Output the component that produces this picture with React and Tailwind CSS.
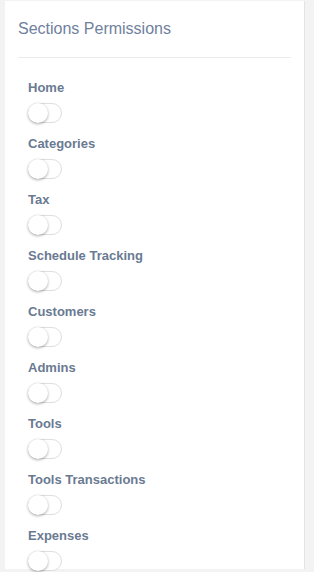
import { useState } from "react";

const sections = [
  "Home",
  "Categories",
  "Tax",
  "Schedule Tracking",
  "Customers",
  "Admins",
  "Tools",
  "Tools Transactions",
  "Expenses",
];

function Toggle({ on, onChange }) {
  return (
    <button
      type="button"
      onClick={onChange}
      className={`relative block h-[20px] w-[34px] rounded-full border ${
        on ? "border-[#7b8fb0] bg-[#7b8fb0]" : "border-[#dedede] bg-white"
      }`}
    >
      <span
        className={`absolute top-[-1px] h-[20px] w-[20px] rounded-full bg-white shadow-[0_1px_3px_rgba(0,0,0,0.35)] ${
          on ? "left-[13px]" : "left-[-1px]"
        }`}
      />
    </button>
  );
}

export default function App() {
  const [perms, setPerms] = useState({});

  return (
    <div className="h-[572px] overflow-hidden bg-[#f3f3f4] pl-[5px] pr-[9px] pt-[1px] font-['Liberation_Sans',Arial,sans-serif]">
      <div className="h-[568px] border-r border-[#e4e4e7] bg-white px-[13px]">
        <h2 className="pt-[18px] text-[16px] leading-[20px] text-[#6f819d]">
          Sections Permissions
        </h2>
        <div className="mt-[18px] border-t border-[#ebebeb]" />
        <div className="px-[10px] pt-[22px]">
          {sections.map((s) => (
            <div key={s} className="mb-[13px]">
              <div className="mb-[7px] text-[13px] font-bold leading-[16px] text-[#6a7a92]">
                {s}
              </div>
              <Toggle
                on={!!perms[s]}
                onChange={() => setPerms({ ...perms, [s]: !perms[s] })}
              />
            </div>
          ))}
        </div>
      </div>
    </div>
  );
}
